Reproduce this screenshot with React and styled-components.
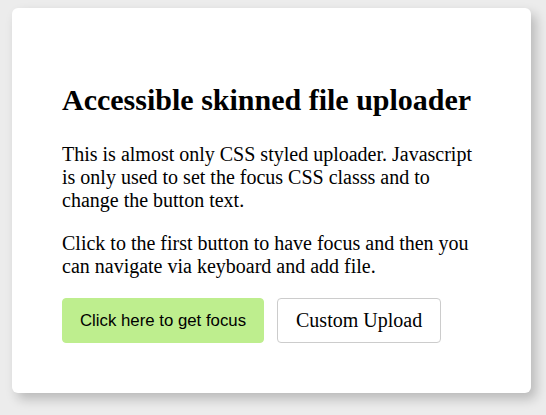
import React from 'react';
import styled, {createGlobalStyle} from 'styled-components';

const GlobalStyle = createGlobalStyle`
  html, body {
    margin: 0;
    background: #ececec;
  }
  body {
    font-family: "Liberation Serif", "Times New Roman", serif;
    font-size: 20px;
    color: #000;
  }
`;

const Page = styled.div`
  padding: 8px 15px 22px 12px;
`;

const Card = styled.section`
  background: #fff;
  border-radius: 6px;
  padding: 50px;
  box-shadow: 5px 6px 12px rgba(0, 0, 0, 0.22);
`;

const Title = styled.h2`
  font-size: 30px;
  font-weight: bold;
  margin: 25px 0 26px;
`;

const Text = styled.p`
  margin: 0 0 20px;
  line-height: 23px;
`;

const Actions = styled.div`
  display: flex;
  gap: 13px;
`;

const Button = styled.button`
  font-family: ${p => p.$primary ? '"Liberation Sans", Arial, sans-serif' : '"Liberation Serif", "Times New Roman", serif'};
  font-size: ${p => p.$primary ? '16.8px' : '20px'};
  line-height: 23px;
  padding: 10px ${p => p.$primary ? '17px' : '18px'};
  border-radius: 4px;
  border: 1px solid ${p => p.$primary ? '#beee8e' : '#cccccc'};
  background: ${p => p.$primary ? '#beee8e' : '#fff'};
  color: #000;
  cursor: pointer;
`;

const FileInput = styled.input`
  position: absolute;
  width: 1px;
  height: 1px;
  opacity: 0;
  overflow: hidden;
`;

export default function App() {
  return (
    <>
      <GlobalStyle/>
      <Page>
        <Card>
          <Title>Accessible skinned file uploader</Title>
          <Text>
            This is almost only CSS styled uploader. Javascript is only used to set the focus CSS classs and to change the button text.
          </Text>
          <Text>
            Click to the first button to have focus and then you can navigate via keyboard and add file.
          </Text>
          <Actions>
            <Button $primary>Click here to get focus</Button>
            <Button as="label">
              Custom Upload
              <FileInput type="file"/>
            </Button>
          </Actions>
        </Card>
      </Page>
    </>
  );
}
